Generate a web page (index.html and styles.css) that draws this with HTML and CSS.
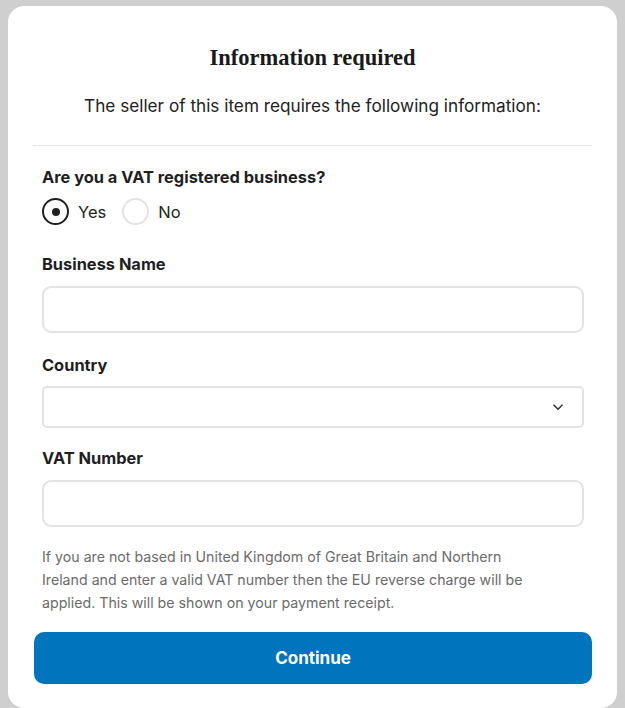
FILE: index.html
```html
<!DOCTYPE html>
<html>
<head>
<meta charset="utf-8">
<link rel="stylesheet" href="styles.css">
</head>
<body>
<div class="card">
  <h1 class="title">Information required</h1>
  <p class="subtitle">The seller of this item requires the following information:</p>
  <hr class="divider">
  <form class="form">
    <div class="field first">
      <div class="label">Are you a VAT registered business?</div>
      <div class="radios">
        <label class="radio"><span class="dot checked"></span><span>Yes</span></label>
        <label class="radio"><span class="dot"></span><span>No</span></label>
      </div>
    </div>
    <div class="field after-radio">
      <div class="label">Business Name</div>
      <div class="input"></div>
    </div>
    <div class="field country">
      <div class="label">Country</div>
      <div class="select">
        <svg class="chev" width="12" height="8" viewBox="0 0 12 8"><path d="M1.5 1.8 L6 6.2 L10.5 1.8" fill="none" stroke="#333" stroke-width="1.5"/></svg>
      </div>
    </div>
    <div class="field vat">
      <div class="label">VAT Number</div>
      <div class="input"></div>
    </div>
    <p class="help">If you are not based in United Kingdom of Great Britain and Northern<br>Ireland and enter a valid VAT number then the EU reverse charge will be<br>applied. This will be shown on your payment receipt.</p>
  </form>
  <div class="actions"><button class="btn" type="button">Continue</button></div>
</div>
</body>
</html>
```
FILE: styles.css
```css
html, body { margin: 0; padding: 0; }
body {
  background: #cfcfcf;
  font-family: Inter, "Noto Sans", sans-serif;
  color: #1f1f1f;
  height: 708px;
  overflow: hidden;
}
.card {
  background: #fff;
  margin: 6px 8px 0 8px;
  border-radius: 16px;
  padding: 0 25px 0 25px;
  height: 702px;
  overflow: hidden;
}
.title {
  margin: 0;
  padding-top: 39px;
  font-family: "Liberation Serif", serif;
  font-size: 22.5px;
  font-weight: bold;
  text-align: center;
  line-height: 26px;
  color: #1a1a1a;
}
.subtitle {
  margin: 23px 0 0 0;
  text-align: center;
  font-size: 17.2px;
  line-height: 24px;
  color: #222;
}
.divider {
  margin: 27px 0 0 0;
  border: 0;
  border-top: 1px solid #e6e6e6;
}
.form { padding: 0 8px 0 9px; }
.field { margin-top: 21px; }
.field.after-radio { margin-top: 29px; }
.field.country { margin-top: 22px; }
.field.vat { margin-top: 20px; }
.label {
  font-size: 16.4px;
  font-weight: 700;
  line-height: 20px;
  color: #1f1f1f;
}
.radios { display: flex; gap: 16px; margin-top: 11px; }
.radio { display: flex; align-items: center; gap: 9px; font-size: 16.5px; color: #222; }
.dot {
  width: 23px; height: 23px;
  border: 2px solid #e3e3e3;
  border-radius: 50%;
  display: flex; align-items: center; justify-content: center;
}
.dot.checked { border-color: #1f1f1f; }
.dot.checked::after {
  content: ""; width: 8px; height: 8px; border-radius: 50%; background: #1f1f1f;
}
.input {
  margin-top: 12px;
  height: 43px;
  border: 2px solid #e3e3e3;
  border-radius: 9px;
}
.select {
  margin-top: 11px;
  height: 38px;
  border: 2px solid #e3e3e3;
  border-radius: 5px;
  display: flex; align-items: center; justify-content: flex-end;
  padding-right: 18px;
}
.help {
  margin: 18px 0 0 0;
  font-size: 14.2px;
  line-height: 23px;
  color: #6b6b6b;
}
.actions { margin-top: 18px; padding: 0 0 0 1px; }
.btn {
  width: 100%;
  height: 52px;
  border: 0;
  border-radius: 10px;
  background: #0074bd;
  color: #fff;
  font-family: Inter, "Noto Sans", sans-serif;
  font-size: 17px;
  font-weight: 700;
}
```
